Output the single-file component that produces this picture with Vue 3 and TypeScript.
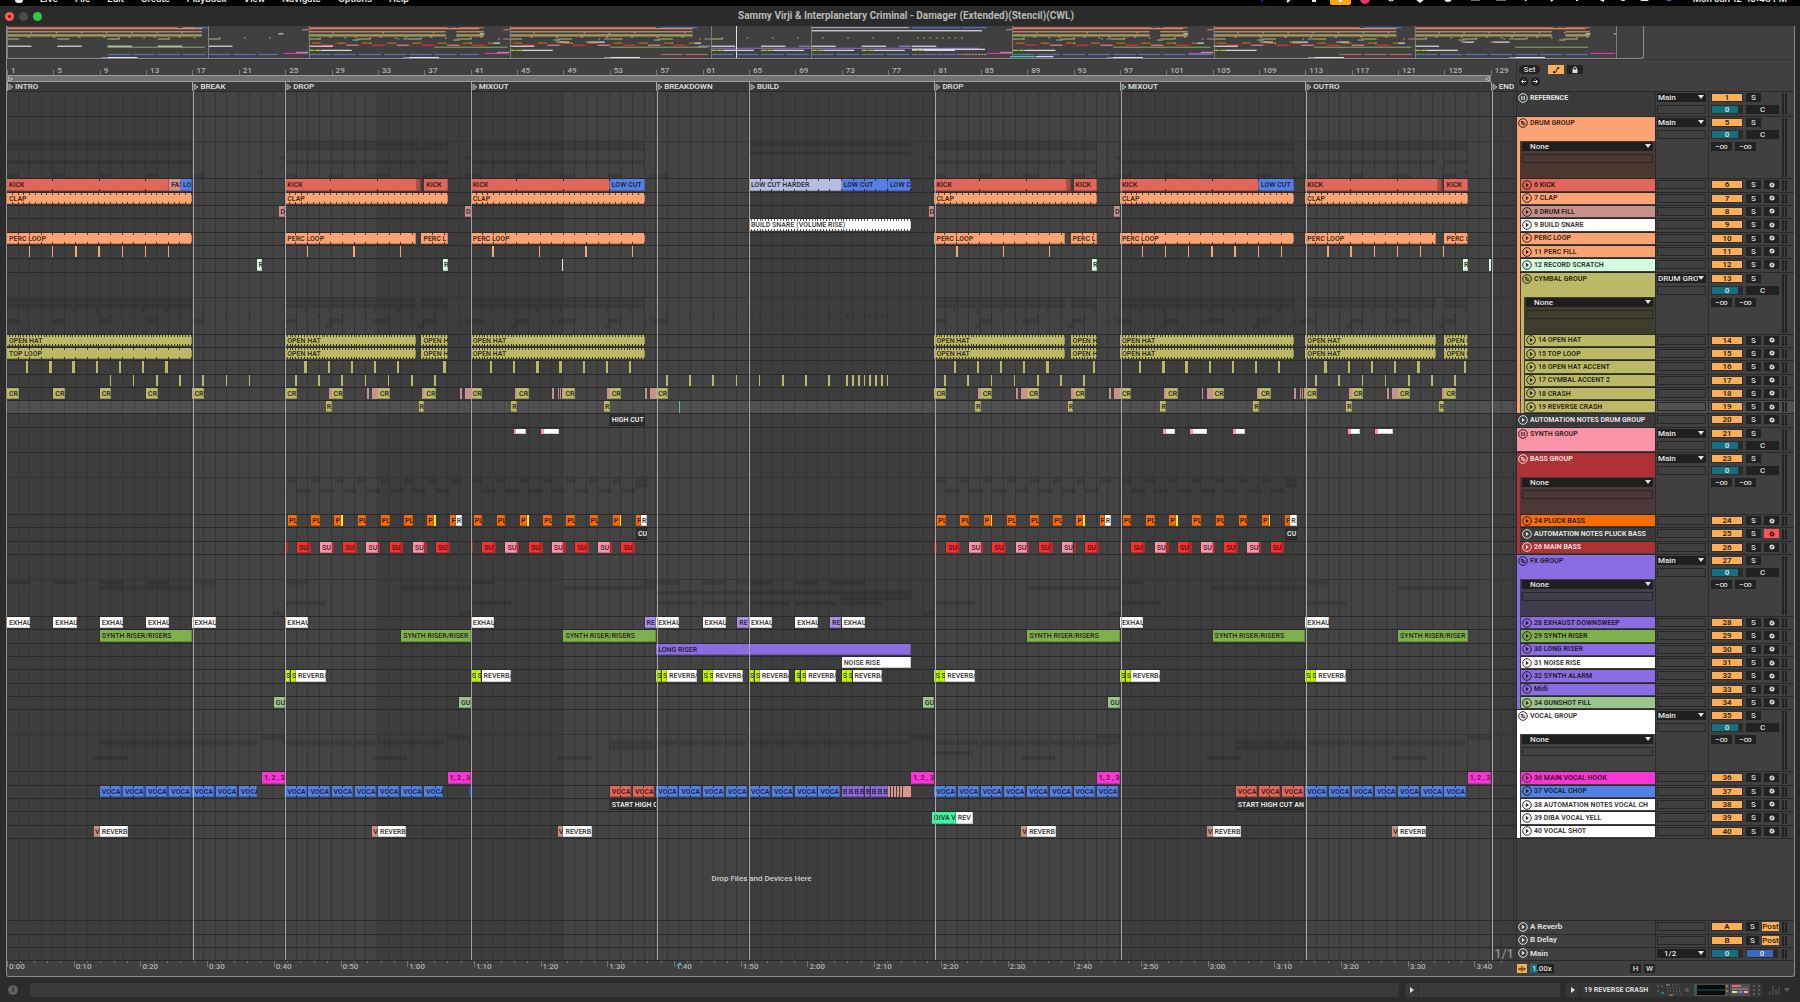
<script setup lang="ts">
type Tone =
  | 'red' | 'darkred' | 'blue' | 'navy' | 'orange' | 'dusty' | 'white' | 'mint' | 'olive' | 'lavender'
  | 'pluck' | 'yellow' | 'bass' | 'bassdark' | 'pink' | 'green' | 'violet' | 'lime' | 'sage' | 'magenta'
  | 'coral' | 'diva' | 'salmon' | 'purple' | 'note'

interface Clip { at: number; len: number; tone: Tone; label?: string; tick?: number }
interface Track {
  kind: 'track' | 'group' | 'folded' | 'return' | 'main'
  name: string
  num: string
  color: string
  ink?: string
  clips: Clip[]
  strips: string[]
  route?: string
  tint?: string
  children?: string[]
  selected?: boolean
  armed?: boolean
}

const VIEW = 130.17
const pct = (bars: number): string => `${(bars / VIEW) * 100}%`

const span = (from: number, to: number, tone: Tone, label = '', tick = 0): Clip =>
  ({ at: from, len: to - from, tone, label, tick })
const each = (starts: number[], len: number, tone: Tone, label = '', tick = 0): Clip[] =>
  starts.map((s) => ({ at: s, len, tone, label, tick }))
const every = (from: number, to: number, step: number): number[] => {
  const out: number[] = []
  for (let v = from; v <= to + 0.001; v += step) out.push(v)
  return out
}

const ORANGE = '#fca373'
const OLIVE = '#bcb966'
const BASS = '#ae3133'
const VIOLET = '#8a6ce3'
const WHITE = '#ffffff'

const loopRanges: [number, number][] = [
  [1, 17], [25, 36.25], [36.75, 39], [41, 56], [81, 92.25], [92.75, 95], [97, 112], [113, 124.25], [125, 127],
]
const fullRanges: [number, number][] = [[1, 17], [25, 39], [41, 56], [81, 95], [97, 112], [113, 127]]

const kick: Clip[] = [
  span(1, 15, 'red', 'KICK', 4), span(15, 16, 'dusty', 'FAS'), span(16, 17, 'blue', 'LO'),
  span(25, 36.4, 'red', 'KICK', 4), span(36.4, 36.75, 'darkred'), span(37, 39, 'red', 'KICK'),
  span(41, 53, 'red', 'KICK', 4), span(53, 56, 'blue', 'LOW CUT'),
  span(65, 73, 'lavender', 'LOW CUT HARDER', 1), span(73, 77, 'blue', 'LOW CUT', 1), span(77, 79, 'blue', 'LOW C', 1),
  span(81, 92.4, 'red', 'KICK', 4), span(92.4, 92.75, 'darkred'), span(93, 95, 'red', 'KICK'),
  span(97, 109, 'red', 'KICK', 4), span(109, 112, 'blue', 'LOW CUT'),
  span(113, 124.4, 'red', 'KICK', 4), span(124.4, 124.8, 'darkred'), span(125, 127, 'red', 'KICK'),
]

const crash: Clip[] = [
  ...each([1, 5, 9, 13, 17, 25, 29, 33, 37, 41, 45, 49, 53, 57, ...every(81, 125, 4)], 1, 'olive', 'CR'),
  ...each([28.8, 36.8, 44.8, 52.8, 84.8, 92.8, 100.8, 108.8, 116.8, 124.8], 0.2, 'dusty'),
  ...[32, 40, 48, 56, 88, 96, 104, 112, 120].flatMap((b) => each([b + 0.05, b + 0.5, b + 0.67, b + 0.84], 0.16, 'dusty')),
]

const pluck: Clip[] = [25, 41, 81, 97].flatMap((b) => [
  ...each([b + 0.25, b + 2.25, b + 6.25, b + 8.25, b + 10.25], 0.75, 'pluck', 'PL'),
  ...each([b + 4.25, b + 12.25], 0.6, 'pluck', 'P'),
  ...each([b + 4.85, b + 12.85], 0.14, 'yellow'),
  span(b + 14.25, b + 14.7, 'pluck', 'F'),
  span(b + 14.7, b + 15.25, 'white', 'R'),
])

const bass: Clip[] = [25, 41, 81, 97].flatMap((b) => [
  ...each([b + 1, b + 5, b + 9, b + 13], 1, 'bass', 'SU'),
  ...each([b + 3, b + 7, b + 11], 1, 'pink', 'SU'),
  ...each([b, ...every(b + 2, b + 14, 2)], 0.2, 'bassdark'),
])

const alarm: Clip[] = [25, 41, 57, 61, 65, 69, 73, 81, 97, 113].flatMap((b) => [
  span(b, b + 0.45, 'lime', 'S'), span(b + 0.5, b + 0.92, 'lime', 'S'), span(b + 0.94, b + 3.5, 'white', 'REVERB/'),
])

const chop: Clip[] = [
  ...each([...every(9, 19, 2), ...every(25, 35, 2), ...every(57, 71, 2), ...every(81, 95, 2), ...every(113, 125, 2)],
    1.84, 'blue', 'VOCA', 1),
  ...each([21, 37], 1.6, 'blue', 'VOCA', 1),
  ...each([10.84, 12.84, 14.84, 16.84, 18.84, 24.86, 40.86], 0.14, 'navy'),
  ...each([53, 55, 107, 109, 111], 1.84, 'coral', 'VOCA', 1),
  ...each(every(73, 76.5, 0.5), 0.46, 'purple', 'B'),
  ...each(every(77, 78.75, 0.25), 0.2, 'salmon'),
]

const shot: Clip[] = [9, 33, 49, 89, 105, 121].flatMap((b) => [
  span(b - 0.5, b, 'dusty', 'V'), span(b, b + 2.45, 'white', 'REVERB'),
])

const clap: Clip[] = fullRanges.map(([a, b]) => span(a, b, 'orange', 'CLAP', 0.5))
const fill: Clip[] = each([24.5, 40.5, 80.5, 96.5], 0.5, 'dusty', 'D')
const snare: Clip[] = [span(65, 79, 'white', 'BUILD SNARE (VOLUME RISE)', 0.25)]
const perc: Clip[] = loopRanges.map(([a, b]) => span(a, b, 'orange', b - a < 3 ? 'PERC L' : 'PERC LOOP', 1))
const percFill: Clip[] = each(
  [...every(2.88, 14.88, 2), 26.88, 30.88, 34.88, 42.88, 46.88, 50.88, 54.88, 82.88, 86.88, 90.88,
    ...every(98.88, 110.88, 2), ...every(114.88, 124.88, 2)], 0.12, 'orange')
const scratch: Clip[] = [
  ...each([22.6, 38.6, 94.6, 126.6], 0.4, 'mint', 'R'), span(48.88, 49, 'mint'), span(128.86, 129, 'mint'),
]
const hat: Clip[] = loopRanges.map(([a, b]) => span(a, b, 'olive', b - a < 3 ? 'OPEN H' : 'OPEN HAT', 0.25))
const top: Clip[] = hat.map((c, i) => (i === 0 ? { ...c, label: 'TOP LOOP', tick: 1 } : c))
const accent: Clip[] = each(
  [...every(2.65, 14.65, 2), ...every(26.65, 34.65, 2), 38.65, ...every(42.65, 54.65, 2), ...every(82.65, 90.65, 2), 94.65,
    ...every(98.65, 110.65, 2), ...every(114.65, 122.65, 2), 126.65], 0.2, 'olive')
const accent2: Clip[] = each(
  [...every(9.85, 21.85, 2), ...every(25.85, 37.85, 2), ...every(57.85, 71.85, 2), ...every(73.4, 76.9, 0.5),
    ...every(81.85, 93.85, 2), ...every(113.85, 125.85, 2)], 0.14, 'olive')
const reverse: Clip[] = each([28.5, 36.5, 44.5, 52.5, ...every(84.5, 124.5, 8)], 0.5, 'olive', 'R')
const synthMinis: Clip[] = ([[44.7, 45.75], [47.05, 48.6], [100.7, 101.75], [103.05, 104.55], [106.75, 107.8],
  [116.7, 117.75], [119.05, 120.6]] as [number, number][])
  .flatMap(([a, b]) => [span(a, a + 0.25, 'pink'), span(a + 0.25, b, 'white')])
const exhaust: Clip[] = [
  ...each([1, 5, 9, 13, 17, 25, 41, 57, 61, 65, 69, 73, 97, 113], 2, 'white', 'EXHAU'),
  ...each([56, 64, 72], 0.97, 'violet', 'RE'),
]
const riser: Clip[] = ([[9, 17], [35, 41], [49, 57], [89, 97], [105, 113], [121, 127]] as [number, number][])
  .map(([a, b]) => span(a, b, 'green', b - a < 8 ? 'SYNTH RISER/RISER' : 'SYNTH RISER/RISERS'))

const t = (num: string, name: string, color: string, strips: string[], clips: Clip[], extra: Partial<Track> = {}): Track =>
  ({ kind: 'track', num, name, color, strips, clips, ...extra })

const DARK_INK = '#e2e2e2'
const tracks: Track[] = [
  t('1', 'REFERENCE', '#3a3a3a', [], [], { kind: 'folded', route: 'Main', ink: DARK_INK }),
  t('5', 'DRUM GROUP', ORANGE, [], [], { kind: 'group', route: 'Main', tint: '#4b3831', children: ['6', '7', '9', '8', '10', '11', '12', '18'] }),
  t('6', '6 KICK', '#e26659', [ORANGE], kick),
  t('7', '7 CLAP', ORANGE, [ORANGE], clap),
  t('8', '8 DRUM FILL', '#c9908c', [ORANGE], fill),
  t('9', '9 BUILD SNARE', WHITE, [ORANGE], snare),
  t('10', 'PERC LOOP', ORANGE, [ORANGE], perc),
  t('11', '11 PERC FILL', ORANGE, [ORANGE], percFill),
  t('12', '12 RECORD SCRATCH', '#d3fde1', [ORANGE], scratch),
  t('13', 'CYMBAL GROUP', OLIVE, [ORANGE], [], { kind: 'group', route: 'DRUM GROU', tint: '#3f3e2d', children: ['14', '15', '16', '17', '18', '19'] }),
  t('14', '14 OPEN HAT', OLIVE, [ORANGE, OLIVE], hat),
  t('15', '15 TOP LOOP', OLIVE, [ORANGE, OLIVE], top),
  t('16', '16 OPEN HAT ACCENT', OLIVE, [ORANGE, OLIVE], accent),
  t('17', '17 CYMBAL ACCENT 2', OLIVE, [ORANGE, OLIVE], accent2),
  t('18', '18 CRASH', OLIVE, [ORANGE, OLIVE], crash),
  t('19', '19 REVERSE CRASH', OLIVE, [ORANGE, OLIVE], reverse, { selected: true }),
  t('20', 'AUTOMATION NOTES DRUM GROUP', '#3a3a3a', [], [span(53, 56, 'note', 'HIGH CUT')], { ink: DARK_INK }),
  t('21', 'SYNTH GROUP', '#fb93a8', [], synthMinis, { kind: 'folded', route: 'Main' }),
  t('23', 'BASS GROUP', BASS, [], [], { kind: 'group', route: 'Main', tint: '#4c3839', ink: '#f3dede', children: ['24', '25', '26'] }),
  t('24', '24 PLUCK BASS', '#f66c05', [BASS], pluck),
  t('25', 'AUTOMATION NOTES PLUCK BASS', '#3a3a3a', [BASS], [span(55.25, 56.25, 'note', 'CU'), span(111.25, 112.25, 'note', 'CU')], { ink: DARK_INK, armed: true }),
  t('26', '26 MAIN BASS', BASS, [BASS], bass, { ink: '#f3dede' }),
  t('27', 'FX GROUP', VIOLET, [], [], { kind: 'group', route: 'Main', tint: '#403d4d', children: ['28', '29', '30', '31', '32', '33', '34'] }),
  t('28', '28 EXHAUST DOWNSWEEP', VIOLET, [VIOLET], exhaust),
  t('29', '29 SYNTH RISER', '#7fb04e', [VIOLET], riser),
  t('30', '30 LONG RISER', VIOLET, [VIOLET], [span(57, 79, 'purple', 'LONG RISER')]),
  t('31', '31 NOISE RISE', WHITE, [VIOLET], [span(73, 79, 'white', 'NOISE RISE')]),
  t('32', '32 SYNTH ALARM', VIOLET, [VIOLET], alarm),
  t('33', 'Midi', VIOLET, [VIOLET], []),
  t('34', '34 GUNSHOT FILL', '#9cc58e', [VIOLET], each([24, 40, 80, 96], 1, 'sage', 'GU')),
  t('35', 'VOCAL GROUP', WHITE, [], [], { kind: 'group', route: 'Main', tint: '#424242', children: ['36', '37', '38', '39', '40'] }),
  t('36', '36 MAIN VOCAL HOOK', '#f935d6', [WHITE], each([23, 39, 79, 95, 127], 2, 'magenta', '1, 2 , 3')),
  t('37', '37 VOCAL CHOP', '#5380e5', [WHITE], chop),
  t('38', '38 AUTOMATION NOTES VOCAL CH', WHITE, [WHITE], [span(53, 57, 'note', 'START HIGH C'), span(107, 113, 'note', 'START HIGH CUT AN')]),
  t('39', '39 DIBA VOCAL YELL', WHITE, [WHITE], [span(80.8, 82.85, 'diva', 'DIVA V'), span(82.85, 84.3, 'white', 'REV')]),
  t('40', '40 VOCAL SHOT', WHITE, [WHITE], shot),
]

const returns: Track[] = [
  t('A', 'A Reverb', '#404040', [], [], { kind: 'return', ink: DARK_INK }),
  t('B', 'B Delay', '#404040', [], [], { kind: 'return', ink: DARK_INK }),
  t('', 'Main', '#404040', [], [], { kind: 'main', ink: DARK_INK }),
]

const GROW: Record<Track['kind'], number> = { track: 40, folded: 76, group: 186, return: 40, main: 40 }
const childTracks = (tr: Track): Track[] => (tr.children ?? []).map((n) => tracks.find((x) => x.num === n) as Track)
const ghostRows = (tr: Track): number => Math.max(7, (tr.children ?? []).length)

const overviewRows = tracks.filter((x) => x.kind === 'track' || x.num === '21')

const TONES: Record<Tone, string> = {
  red: '#e26659', darkred: '#a84e45', blue: '#5380e5', navy: '#2c4f9f', orange: '#fca373', dusty: '#c9908c', white: '#ffffff',
  mint: '#d3fde1', olive: '#bcb966', lavender: '#b5bee2', pluck: '#f66c05', yellow: '#f5ea2e', bass: '#f9302e', bassdark: '#b32a2c',
  pink: '#fb93a8', green: '#7fb04e', violet: '#a993ea', lime: '#bff900', sage: '#9cc58e', magenta: '#f935d6', coral: '#e26659',
  diva: '#3ff5a0', salmon: '#d9978a', purple: '#8a6ce3', note: '#2e2e2e',
}

const locators = [
  { bar: 1, name: 'INTRO' }, { bar: 17, name: 'BREAK' }, { bar: 25, name: 'DROP' }, { bar: 41, name: 'MIXOUT' },
  { bar: 57, name: 'BREAKDOWN' }, { bar: 65, name: 'BUILD' }, { bar: 81, name: 'DROP' }, { bar: 97, name: 'MIXOUT' },
  { bar: 113, name: 'OUTRO' }, { bar: 129, name: 'END' },
]
const barLabels = every(1, 129, 4)
const BARS_PER_SECOND = 0.575
const times = every(0, 220, 10).map((s) => ({ s, text: `${Math.floor(s / 60)}:${String(s % 60).padStart(2, '0')}` }))
const timeTicks = every(0, 224, 2)
const menus = ['Live', 'File', 'Edit', 'Create', 'Playback', 'View', 'Navigate', 'Options', 'Help']
const tickPct = (c: Clip): string => `${((c.tick ?? 0) / c.len) * 100}%`
</script>

<template>
  <div class="app">
    <nav class="menubar">
      <span class="apple"></span>
      <a v-for="m in menus" :key="m" href="#">{{ m }}</a>
      <span class="push"></span>
      <svg class="status" viewBox="0 0 420 6" aria-hidden="true">
        <path d="M5 0h3l-2 3z" fill="#4340ff" />
        <path d="M34 0l-3 3" stroke="#eee" stroke-width="2" />
        <path d="M53 0h10v1h-3v2h-4v-2h-3z" fill="#eee" />
        <rect x="74" y="-4" width="21" height="10" rx="2" fill="#fea711" />
        <path d="M81 0h7v1h-2v2h-3v-2h-2z" fill="#fff" />
        <circle cx="109" cy="0" r="5" fill="#f2326c" />
        <circle cx="135" cy="-1" r="3" fill="none" stroke="#eee" />
        <path d="M159 0h10l-5 4z" fill="#eee" />
        <circle cx="192" cy="-1" r="4" fill="#eee" />
        <path d="M215 0v1h9v-1M240 1h10" stroke="#ddd" fill="none" />
        <path d="M268 0l2 2v-2M275 0v1" stroke="#eee" fill="none" />
        <path d="M297 0l-2 2M321 0v2M344 0l4 2" stroke="#eee" stroke-width="2" />
        <circle cx="367" cy="-1" r="3" fill="#eee" />
        <rect x="384" y="-4" width="9" height="6" rx="2" fill="#eee" />
        <circle cx="413" cy="-2" r="4" fill="#5e73b4" />
      </svg>
      <span class="clock">Mon Jan 12&nbsp; 10:43 PM</span>
    </nav>

    <header class="titlebar">
      <div class="lights">
        <button class="light close" aria-label="Close"></button>
        <button class="light mini" aria-label="Minimise"></button>
        <button class="light zoom" aria-label="Zoom"></button>
      </div>
      <h1>Sammy Virji &amp; Interplanetary Criminal - Damager (Extended)(Stencil)(CWL)</h1>
    </header>

    <main class="window">
      <div class="overview">
        <div class="overview-map">
          <svg :viewBox="`0 0 ${VIEW} ${overviewRows.length + 1}`" preserveAspectRatio="none" aria-hidden="true">
            <g v-for="(tr, i) in overviewRows" :key="tr.num">
              <rect
                v-for="(c, j) in tr.clips" :key="j" :x="c.at - 1" :y="i + 1" :width="c.len * 0.97"
                height="1.2" :fill="TONES[c.tone]" :opacity="c.tone === 'note' ? 0 : 0.8"
              />
            </g>
          </svg>
          <i v-for="l in locators" :key="l.bar" class="overview-mark" :style="{ left: pct(l.bar - 1) }"></i>
          <i class="overview-mark bright" :style="{ left: pct(58) }"></i>
        </div>
      </div>

      <div class="top">
        <div class="rulers">
          <div class="ruler">
            <span v-for="b in barLabels" :key="b" class="bar-label" :style="{ left: pct(b - 1) }">{{ b }}</span>
          </div>
          <div class="loop"><div class="loop-bar" :style="{ width: pct(128) }">
            <svg viewBox="0 0 7 7"><path d="M1 1l5 2.500l-5 2.500z" /></svg>
            <svg viewBox="0 0 7 7"><path d="M6 1l-5 2.500l5 2.500z" /></svg>
          </div></div>
          <div class="locators">
            <span v-for="l in locators" :key="l.bar" class="locator" :style="{ left: pct(l.bar - 1) }">
              <svg viewBox="0 0 6 8" aria-hidden="true"><path d="M1 1l4 3l-4 3z" /></svg>{{ l.name }}
            </span>
          </div>
        </div>
        <div class="top-tools">
          <div class="tool-line">
            <button class="pill">Set</button>
            <button class="square on" aria-label="Automation"><svg viewBox="0 0 10 8"><path d="M2 6.500h2.500l2-4.500h2" fill="none" stroke="#222" /><circle cx="3" cy="6" r="1" fill="#222" /><circle cx="7" cy="2" r="1" fill="#222" /></svg></button>
            <button class="square" aria-label="Lock envelopes"><svg viewBox="0 0 10 8"><rect x="2.500" y="3.500" width="5" height="3.500" fill="#ddd" /><path d="M3.500 4v-1.500a1.500 1.500 0 0 1 3 0v1.500" fill="none" stroke="#ddd" /></svg></button>
          </div>
          <div class="tool-line">
            <button class="round" aria-label="Previous locator"><svg viewBox="0 0 9 9"><path d="M7 4.500h-4M4.500 2.500l-2 2l2 2" /></svg></button>
            <button class="round" aria-label="Next locator"><svg viewBox="0 0 9 9"><path d="M2 4.500h4M4.500 2.500l2 2l-2 2" /></svg></button>
          </div>
        </div>
      </div>

      <div class="arrangement">
        <template v-for="section in [tracks, returns]" :key="section[0].num">
          <section
            v-for="tr in section" :key="tr.name" class="row" :class="[tr.kind, { selected: tr.selected }]"
            :style="{ flexGrow: GROW[tr.kind] }"
          >
            <div class="lane">
              <div
                v-for="(c, i) in tr.clips" :key="i" class="clip"
                :class="[c.tone, { ticked: c.tick, sliver: c.len < 0.3, tiny: c.len < 0.8 }]"
                :style="{ left: pct(c.at - 1), width: pct(c.len), '--tick': tickPct(c) }"
              >{{ c.label }}</div>
              <svg
                v-if="tr.kind === 'group'" class="ghost" :viewBox="`0 0 ${VIEW} ${ghostRows(tr)}`"
                preserveAspectRatio="none" aria-hidden="true"
              >
                <g v-for="(ch, i) in childTracks(tr)" :key="ch.num">
                  <rect v-for="(c, j) in ch.clips" :key="j" :x="c.at - 1" :y="i + 0.1" :width="c.len" height="0.8" />
                </g>
              </svg>
              <i v-if="tr.selected" class="playhead" :style="{ left: pct(58) }"></i>
              <span v-if="tr.kind === 'main'" class="grid-size">1/1</span>
            </div>

            <div class="head">
              <i v-for="(s, i) in tr.strips" :key="i" class="strip" :style="{ background: s }"></i>
              <div class="name-col">
                <div class="name" :style="{ background: tr.color, color: tr.ink ?? 'rgba(20, 14, 12, 0.86)' }">
                  <svg v-if="tr.kind === 'group'" class="icon" viewBox="0 0 10 10"><circle cx="5" cy="5" r="4.300" /><path d="M2.800 3.500h2.400M4 5h3.200M4.800 6.600h2.600M4 3.500v3.100" /></svg>
                  <svg v-else-if="tr.kind === 'folded'" class="icon" viewBox="0 0 10 10"><circle cx="5" cy="5" r="4.300" /><path class="thin" d="M3.500 3v4M5 3v4M6.500 3v4" /></svg>
                  <svg v-else class="icon" viewBox="0 0 10 10"><circle cx="5" cy="5" r="4.300" /><path class="solid" d="M3.900 2.800l3 2.200l-3 2.200z" /></svg>
                  <span>{{ tr.name }}</span>
                </div>
                <div v-if="tr.kind === 'group'" class="fold" :style="{ borderLeftColor: tr.color, background: tr.tint }">
                  <label class="picker">
                    <select :aria-label="`${tr.name} automation device`"><option>None</option></select>
                  </label>
                  <span class="slot"></span>
                </div>
              </div>
              <div class="io">
                <label v-if="tr.route" class="picker"><select :aria-label="`${tr.name} output`"><option>{{ tr.route }}</option></select></label>
                <label v-if="tr.kind === 'main'" class="picker cue"><select aria-label="Main output"><option>1/2</option></select></label>
                <span v-if="tr.kind !== 'main'" class="slot"></span>
              </div>
              <div class="mixer">
                <div v-if="tr.kind === 'main'" class="mix-line">
                  <button class="num vol">0</button><button class="num cuevol">0</button>
                </div>
                <div v-else class="mix-line">
                  <button class="num">{{ tr.num }}</button>
                  <button class="solo">S</button>
                  <button v-if="tr.kind === 'return'" class="post">Post</button>
                  <button v-if="tr.kind === 'track'" class="arm" :class="{ armed: tr.armed }" :aria-label="`Arm ${tr.name}`">
                    <svg viewBox="0 0 8 8"><circle cx="4" cy="4" r="2.500" /><path d="M3.200 5.200l1.600-2.600" /></svg>
                  </button>
                </div>
                <div v-if="tr.route" class="mix-line"><button class="num vol">0</button><button class="pan">C</button></div>
                <div v-if="tr.kind === 'group'" class="mix-line"><button class="send">−∞</button><button class="send">−∞</button></div>
              </div>
              <div class="meter"><i></i><i></i></div>
            </div>
          </section>
          <section v-if="section === tracks" class="row drop">
            <div class="lane"><p>Drop Files and Devices Here</p></div>
            <div class="head"></div>
          </section>
        </template>
        <div class="marks">
          <i v-for="l in locators.slice(1)" :key="l.bar" :style="{ left: pct(l.bar - 1) }"></i>
        </div>
      </div>

      <div class="bottom-ruler">
        <div class="time-ruler">
          <i v-for="s in timeTicks" :key="s" class="time-tick" :style="{ left: pct(s * BARS_PER_SECOND) }"></i>
          <span v-for="x in times" :key="x.s" class="time" :style="{ left: pct(x.s * BARS_PER_SECOND) }">{{ x.text }}</span>
          <i class="insert" :style="{ left: pct(58) }"></i>
        </div>
        <div class="bottom-tools">
          <button class="wave" aria-label="Waveform zoom"><svg viewBox="0 0 10 8"><path d="M1 4h8M3 2.500v3M5 1v6M7 2.500v3" stroke="#5a3400" fill="none" /></svg></button>
          <input class="speed" value="1.00x" aria-label="Zoom factor">
          <span class="push"></span>
          <button class="key">H</button>
          <button class="key">W</button>
        </div>
      </div>
    </main>

    <footer class="footer">
      <button class="info" aria-label="Info view">i</button>
      <div class="field wide"></div>
      <div class="field"><button class="play" aria-label="Show clip"><svg viewBox="0 0 6 8"><path d="M1 1l4 3l-4 3z" /></svg></button></div>
      <div class="field device">
        <button class="play" aria-label="Show device"><svg viewBox="0 0 6 8"><path d="M1 1l4 3l-4 3z" /></svg></button>
        <span class="device-name">19 REVERSE CRASH</span>
        <svg class="chain" viewBox="0 0 106 14" aria-hidden="true">
          <g fill="#666"><circle cx="2" cy="3" r="1" /><circle cx="6" cy="3" r="1" /><circle cx="2" cy="8" r="1" /></g>
          <rect x="5" y="9" width="3" height="2" fill="#18818b" />
          <path d="M10 2h4M13 12h4" stroke="#d58a50" /><path d="M11 5h14M11 8h14M16 2h9M18 11h7" stroke="#777" stroke-dasharray="1 2" />
          <circle cx="31" cy="7" r="2" fill="#5d5d5d" />
          <rect x="38" y="1" width="35" height="12" fill="#4c4c4c" /><rect x="41" y="2" width="28" height="10" fill="#080c0d" />
          <path d="M41 7h28" stroke="#185c62" /><path d="M38 3h2M38 6h2M38 11h2" stroke="#18818b" /><path d="M70 3h2M70 8h2" stroke="#e9a15b" />
          <rect x="74" y="1" width="20" height="12" fill="#505050" /><path d="M76 3h9" stroke="#e66" stroke-width="2" /><path d="M76 6h16" stroke="#999" />
          <path d="M76 9h5" stroke="#f3e58e" stroke-width="2" /><path d="M82 9h5" stroke="#7d6ce3" stroke-width="2" /><path d="M88 9h4" stroke="#eac" stroke-width="2" />
          <g fill="#686868"><circle cx="98" cy="3" r="1" /><circle cx="103" cy="3" r="1" /><circle cx="98" cy="7" r="1" /><circle cx="103" cy="7" r="1" /><circle cx="98" cy="11" r="1" /><circle cx="103" cy="11" r="1" /></g>
        </svg>
      </div>
      <svg class="cpu" viewBox="0 0 24 14" aria-hidden="true"><path d="M2 12v-4M5 12v-10M8 12v-6M11 12v-8" stroke="#5f5f5f" stroke-width="1" /><path d="M16 5h6l-3 4z" fill="#5f5f5f" /></svg>
    </footer>
  </div>
</template>

<style>
html, body { background: #000; }
</style>

<style scoped>
.app {
  --bar: calc(100% / 130.17);
  --line: #292929;
  display: flex;
  flex-direction: column;
  height: 100vh;
  background: #2c2c2c;
  color: #dcdcdc;
  font: 500 8px/12px Roboto, "Liberation Sans", sans-serif;
  overflow: hidden;
}
.app * { box-sizing: border-box; }
button, input, select { font: inherit; color: inherit; border: 0; padding: 0; margin: 0; border-radius: 0; }
button { display: flex; align-items: center; justify-content: center; background: #222; }
i { display: block; }
.push { flex: 1; }

.menubar {
  display: flex;
  align-items: flex-end;
  flex: none;
  height: 6px;
  gap: 17px;
  padding: 0 13px 1px 15px;
  background: #000;
  color: #ececec;
  font: 600 9px/13px Inter, sans-serif;
  overflow: hidden;
}
.menubar a { color: inherit; text-decoration: none; }
.apple { width: 8px; border-radius: 0 0 4px 4px; background: #eee; align-self: flex-start; height: 3px; }
.status { width: 420px; height: 6px; flex: none; }
.clock { white-space: pre; }

.titlebar {
  position: relative;
  display: flex;
  align-items: center;
  justify-content: center;
  flex: none;
  height: 20px;
  background: #2b2b2b;
}
.lights { position: absolute; left: 5px; display: flex; gap: 5px; }
.light { width: 9px; height: 9px; border-radius: 50%; background: #4c4c4c; }
.light.close { background: radial-gradient(circle, #7d120d 0 1px, #fc5b54 2px); }
.light.zoom { background: #32c840; }
h1 { margin: 0; padding-left: 12px; font: 700 10px/14px Roboto, sans-serif; color: #b9b9b9; }

.window {
  display: flex;
  flex-direction: column;
  flex: 1;
  min-height: 0;
  margin: 0 5px 0 6px;
  border: solid #8c8c8c;
  border-width: 0 1px 1px;
  border-radius: 0 0 3px 3px;
  background: #404040;
  overflow: hidden;
}
.overview { flex: none; height: 34px; border-bottom: 1px solid #343434; padding-right: 150px; }
.overview-map { position: relative; height: 33px; border: solid #8c8c8c; border-width: 0 1px 1px 0; border-radius: 0 0 3px 0; }
.overview-map svg { display: block; width: 100%; height: 32px; }
.overview-mark { position: absolute; top: 0; bottom: 0; width: 1px; background: #7c7c7c; }
.overview-mark.bright { background: #ddd; }

.top { display: flex; flex: none; height: 31px; }
.rulers { flex: 1; border-right: 1px solid #303030; }
.top-tools { flex: none; width: 277px; padding: 5px 2px 0; display: flex; flex-direction: column; gap: 3px; }
.tool-line { display: flex; gap: 3px; }
.tool-line svg { width: 10px; height: 8px; }
.pill { width: 21px; height: 9px; border-radius: 5px; margin-right: 5px; }
.square { width: 16px; height: 9px; }
.square.on { background: #feae57; }
.round { width: 9px; height: 9px; border-radius: 50%; }
.round svg { width: 9px; height: 9px; fill: none; stroke: #e0e0e0; }
.ruler { position: relative; height: 15px; color: #b4b4b4; }
.bar-label { position: absolute; bottom: 0; height: 5px; padding-left: 3px; border-left: 1px solid #777; display: flex; align-items: flex-end; line-height: 9px; }
.loop { height: 7px; }
.loop-bar { display: flex; justify-content: space-between; height: 7px; background: #727272; border: solid #9b9b9b; border-width: 1px 0; }
.loop-bar svg { width: 7px; height: 6px; fill: none; stroke: #bdbdbd; }
.locators { position: relative; height: 9px; background: #3a3a3a; }
.locator { position: absolute; top: 0; display: flex; align-items: center; gap: 1px; height: 9px; line-height: 9px; border-left: 1px solid #a6a6a6; white-space: nowrap; color: #e2e2e2; }
.locator svg { width: 6px; height: 8px; fill: #777; stroke: #a6a6a6; }

.arrangement { position: relative; display: flex; flex-direction: column; flex: 1; min-height: 0; }
.row { display: flex; flex: 1 1 0; min-height: 0; }
.drop { flex-grow: 247; }
.lane {
  position: relative;
  flex: 1;
  min-width: 0;
  overflow: hidden;
  border-right: 1px solid #2c2c2c;
  border-top: 1px solid var(--line);
  background:
    repeating-linear-gradient(90deg, transparent 0 calc(var(--bar) - 1px), #353535 calc(var(--bar) - 1px) var(--bar)),
    repeating-linear-gradient(90deg, #3d3d3d 0 calc(var(--bar) * 16), #434343 calc(var(--bar) * 16) calc(var(--bar) * 32));
}
.selected .lane {
  background:
    repeating-linear-gradient(90deg, transparent 0 calc(var(--bar) - 1px), #434343 calc(var(--bar) - 1px) var(--bar)),
    #505050;
}
.clip {
  position: absolute;
  top: 0;
  bottom: 1px;
  padding-left: 2px;
  overflow: hidden;
  white-space: nowrap;
  font-size: 7px;
  font-weight: 600;
  line-height: 12px;
  color: rgba(20, 14, 12, 0.84);
  box-shadow: inset -1px -1px rgba(0, 0, 0, 0.2);
}
.clip.tiny { padding-left: 1px; }
.clip.sliver { padding: 0; box-shadow: none; }
.clip.ticked::before {
  content: "";
  position: absolute;
  inset: 0;
  --marks: repeating-linear-gradient(90deg, transparent 0 calc(var(--tick) - 1px), rgba(0, 0, 0, 0.65) calc(var(--tick) - 1px) var(--tick));
  background: var(--marks) top / 100% 2px no-repeat, var(--marks) bottom / 100% 2px no-repeat;
}
.folded .clip { top: 1px; bottom: auto; height: 5px; }
.red, .coral { background: #e26659; }
.darkred { background: #a84e45; }
.blue { background: #5380e5; }
.navy { background: #2c4f9f; }
.orange { background: #fca373; }
.dusty { background: #c9908c; }
.white { background: #fff; }
.mint { background: #d3fde1; }
.olive { background: #bcb966; }
.lavender { background: #b5bee2; }
.pluck { background: #f66c05; }
.yellow { background: #f5ea2e; }
.bass { background: #f9302e; }
.bassdark { background: #b32a2c; }
.pink { background: #fb93a8; }
.green { background: #7fb04e; }
.violet { background: #a993ea; }
.lime { background: #bff900; }
.sage { background: #9cc58e; }
.magenta { background: #f935d6; }
.diva { background: #3ff5a0; }
.salmon { background: #d9978a; }
.purple { background: #8a6ce3; }
.note { background: #2e2e2e; color: #e6e6e6; }
.ghost { position: absolute; left: 0; top: 24px; width: 100%; height: calc(100% - 24px); border-top: 1px solid #333; fill: rgba(0, 0, 0, 0.13); }
.playhead { position: absolute; top: 0; bottom: 0; width: 1px; background: #4fc4d6; }
.grid-size { position: absolute; right: 2px; bottom: 0; font-size: 13px; color: #8f8f8f; }
.drop p { margin: 34px 0 0; text-align: center; color: #d0d0d0; }

.head { display: flex; flex: none; width: 277px; background: #404040; border-top: 1px solid var(--line); }
.strip { flex: none; width: 3px; margin: -1px 1px 0 0; }
.name-col { flex: 1; min-width: 0; display: flex; flex-direction: column; border-right: 1px solid #2c2c2c; }
.name { display: flex; align-items: center; gap: 2px; flex: 1; min-height: 0; padding-left: 1px; margin-bottom: 1px; white-space: nowrap; overflow: hidden; font-size: 7px; font-weight: 700; }
.return .name, .main .name { font-size: 8px; font-weight: 600; }
.group .name, .folded .name { align-items: flex-start; padding-top: 1px; }
.group .name { flex: none; height: 24px; margin: 0; }
.group .name span, .folded .name span { line-height: 10px; }
.icon { flex: none; width: 10px; height: 10px; fill: none; stroke: currentColor; stroke-width: 1; }
.icon .thin { stroke-width: 0.8; }
.icon .solid { fill: currentColor; stroke: none; }
.fold { flex: 1; display: flex; flex-direction: column; gap: 3px; border-left: 3px solid; padding: 1px 2px; }
.picker { position: relative; display: block; flex: none; height: 9px; background: #1f1f1f; }
.picker::after { content: ""; position: absolute; right: 2px; top: 2px; border: solid transparent; border-width: 4px 3px 0; border-top-color: #e2e2e2; }
.picker select { display: block; width: 100%; height: 9px; line-height: 9px; appearance: none; background: transparent; padding: 0 8px 0 1px; color: #e6e6e6; outline: none; }
.fold .picker select { padding-left: 8px; }
.picker.cue select { padding-left: 7px; }
.slot { display: block; flex: none; height: 9px; border: 1px solid #272727; }
.io { flex: none; width: 53px; display: flex; flex-direction: column; gap: 3px; padding: 1px 2px 0 1px; border-right: 1px solid #2c2c2c; }
.mixer { flex: none; width: 73px; display: flex; flex-direction: column; gap: 3px; padding: 1px 0 0 2px; }
.mix-line { display: flex; gap: 3px; height: 9px; }
.mix-line button { height: 9px; line-height: 9px; }
.num { width: 32px; background: #feae57; color: #2a1c0c; border: 1px solid #2d2d2d; font-weight: 600; }
.num.vol { background: linear-gradient(90deg, #17707f 0 26px, #2b2b2b 26px); color: #cfe6ea; }
.num.cuevol { background: linear-gradient(90deg, #3c68c0 0 26px, #2b2b2b 26px); color: #dbe6ff; }
.solo { width: 15px; }
.pan { width: 33px; }
.send { width: 21px; }
.arm { width: 15px; }
.arm svg { width: 8px; height: 8px; fill: #d9d9d9; stroke: #222; stroke-width: 1; }
.arm circle { stroke: none; }
.arm.armed { background: #fd5457; }
.arm.armed svg { fill: #40100f; stroke: #fd5457; }
.return .solo { width: 13px; }
.post { width: 17px; background: #feae57; color: #2a1c0c; }
.meter { flex: none; width: 12px; display: flex; gap: 1px; padding: 1px 0 1px; }
.meter i { width: 2px; background: #232323; }
.selected .head { background: #505050; }

.marks { position: absolute; top: 0; bottom: 0; left: 0; right: 277px; pointer-events: none; }
.marks i { position: absolute; top: 0; bottom: 0; width: 1px; background: #a6a6a6; }

.bottom-ruler { display: flex; flex: none; height: 16px; border-top: 1px solid var(--line); }
.time-ruler { position: relative; flex: 1; color: #b4b4b4; }
.time-tick { position: absolute; top: 0; width: 1px; height: 2px; background: #777; }
.time { position: absolute; top: 0; height: 6px; padding-left: 1px; border-left: 1px solid #777; line-height: 11px; }
.insert { position: absolute; top: 1px; margin-left: -2px; border: solid transparent; border-width: 0 2px 3px; border-bottom-color: #2fc0d0; }
.bottom-tools { display: flex; flex: none; align-items: center; width: 277px; padding-right: 139px; gap: 3px; }
.wave { width: 10px; height: 9px; background: #feae57; }
.wave svg { width: 10px; height: 8px; }
.speed { width: 24px; height: 9px; line-height: 9px; padding-left: 2px; background: linear-gradient(90deg, #17707f 0 7px, #1f1f1f 7px); color: #dedede; }
.key { width: 11px; height: 9px; }

.footer { display: flex; align-items: center; flex: none; height: 25px; gap: 6px; padding: 0 8px; background: #2c2c2c; }
.info { width: 10px; height: 10px; margin: 0 6px 0 0; border-radius: 50%; background: #606060; color: #2c2c2c; font-weight: 700; line-height: 10px; }
.field { display: flex; align-items: center; width: 155px; height: 14px; border-radius: 2px; background: #3a3a3a; }
.field.wide { flex: 1; width: auto; }
.field.device { width: 196px; gap: 4px; background: #363636; }
.play { width: 14px; height: 14px; flex: none; background: transparent; border-right: 1px solid #2c2c2c; }
.play svg { width: 6px; height: 8px; fill: #dedede; }
.device-name { flex: 1; white-space: nowrap; font-size: 7px; font-weight: 700; }
.chain { width: 106px; height: 14px; flex: none; }
.cpu { width: 24px; height: 14px; flex: none; }
</style>
